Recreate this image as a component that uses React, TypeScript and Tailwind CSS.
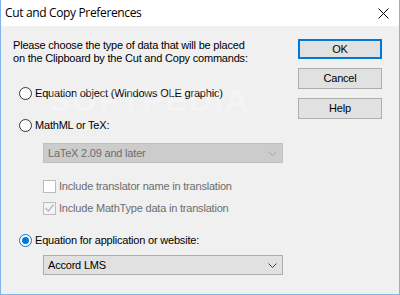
import React from 'react';

const font = { fontFamily: '"Liberation Sans", Arial, sans-serif' };

function Radio({ checked = false }: { checked?: boolean }) {
  return (
    <span
      className={
        'flex h-[13px] w-[13px] shrink-0 items-center justify-center rounded-full border bg-white ' +
        (checked ? 'border-[#0078d7]' : 'border-[#333333]')
      }
    >
      {checked && <span className="h-[7px] w-[7px] rounded-full bg-[#0078d7]" />}
    </span>
  );
}

function Chevron({ color }: { color: string }) {
  return (
    <svg width="9" height="5" viewBox="0 0 9 5" className="shrink-0">
      <path d="M0.5 0.5 L4.5 4.5 L8.5 0.5" fill="none" stroke={color} strokeWidth="1" />
    </svg>
  );
}

export default function App() {
  return (
    <div
      className="relative flex h-[295px] w-[400px] flex-col overflow-hidden border-x border-b border-[#7eb4ea] bg-[#f0f0f0] text-[11px] tracking-[-0.2px] text-black"
      style={font}
    >
      {/* Title bar */}
      <div className="flex h-[26px] shrink-0 items-center justify-between bg-white pl-[4px] pr-[10px]">
        <span
          className="text-[12px] leading-none tracking-[-0.35px]"
          style={{ fontFamily: '"Open Sans", "Noto Sans", sans-serif' }}
        >
          Cut and Copy Preferences
        </span>
        <svg width="11" height="11" viewBox="0 0 11 11">
          <path d="M0.5 0.5 L10.5 10.5 M10.5 0.5 L0.5 10.5" stroke="#000" strokeWidth="1" />
        </svg>
      </div>

      <div className="flex flex-1">
        {/* Left column */}
        <div className="flex flex-1 flex-col pl-[12px]">
          <p className="mt-[13px] leading-[13px]">
            Please choose the type of data that will be placed
            <br />
            on the Clipboard by the Cut and Copy commands:
          </p>

          <label className="ml-[6px] mt-[20px] flex h-[16px] items-center gap-[3px]">
            <Radio />
            <span>Equation object (Windows OLE graphic)</span>
          </label>

          <label className="ml-[6px] mt-[16px] flex h-[16px] items-center gap-[3px]">
            <Radio />
            <span>MathML or TeX:</span>
          </label>

          <div className="ml-[30px] mt-[10px] flex h-[20px] w-[240px] items-center justify-between border border-[#bfbfbf] bg-[#cccccc] pl-[4px] pr-[5px] text-[#6d6d6d]">
            <span>LaTeX 2.09 and later</span>
            <Chevron color="#a6a6a6" />
          </div>

          <label className="ml-[30px] mt-[15px] flex h-[16px] items-center gap-[3px] text-[#6d6d6d]">
            <span className="h-[13px] w-[13px] shrink-0 border border-[#bcbcbc] bg-white" />
            <span>Include translator name in translation</span>
          </label>

          <label className="ml-[30px] mt-[6px] flex h-[16px] items-center gap-[3px] text-[#6d6d6d]">
            <span className="flex h-[13px] w-[13px] shrink-0 items-center justify-center border border-[#bcbcbc] bg-[#f4f4f4]">
              <svg width="9" height="8" viewBox="0 0 9 8">
                <path d="M0.5 4 L3.5 7 L8.5 0.5" fill="none" stroke="#b5b5b5" strokeWidth="1.3" />
              </svg>
            </span>
            <span>Include MathType data in translation</span>
          </label>

          <label className="ml-[6px] mt-[16px] flex h-[16px] items-center gap-[3px]">
            <Radio checked />
            <span>Equation for application or website:</span>
          </label>

          <div className="ml-[30px] mt-[7px] flex h-[20px] w-[240px] items-center justify-between border border-[#adadad] bg-[#e1e1e1] pl-[4px] pr-[5px]">
            <span>Accord LMS</span>
            <Chevron color="#444444" />
          </div>
        </div>

        {/* Right column: buttons */}
        <div className="flex w-[101px] flex-col gap-[9px] pr-[17px] pt-[13px]">
          <button className="h-[20px] w-[84px] border-2 border-[#0078d7] bg-[#e1e1e1] leading-none">OK</button>
          <button className="h-[21px] w-[84px] border border-[#adadad] bg-[#e1e1e1] leading-none">Cancel</button>
          <button className="h-[21px] w-[84px] border border-[#adadad] bg-[#e1e1e1] leading-none">Help</button>
        </div>
      </div>

      {/* Watermark */}
      <span className="pointer-events-none absolute left-[48px] top-[76px] text-[32px] font-bold tracking-[2px] text-white/30">
        SOFTPEDIA
      </span>
    </div>
  );
}
